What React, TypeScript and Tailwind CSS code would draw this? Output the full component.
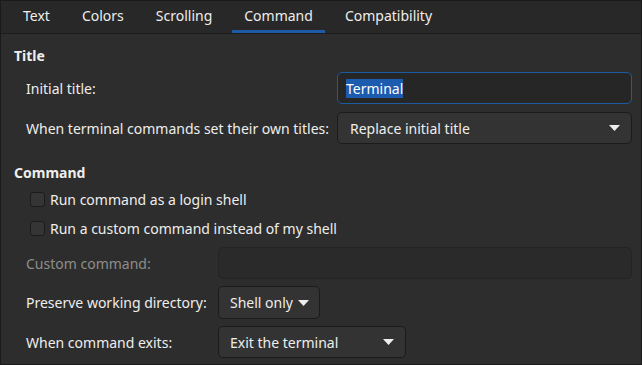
import React from "react";

const tabs = ["Text", "Colors", "Scrolling", "Command", "Compatibility"];

function Caret() {
  return (
    <svg width="11" height="6" viewBox="0 0 11 6" className="shrink-0">
      <path d="M0 0 L11 0 L5.5 6 Z" fill="#eeeeec" />
    </svg>
  );
}

function Check({ label }: { label: string }) {
  return (
    <div className="flex items-center h-[22px] pl-[16px] gap-[5px]">
      <span className="h-[15px] w-[15px] rounded-[3px] border border-[#1b1b1b] bg-[#353535]" />
      <span>{label}</span>
    </div>
  );
}

export default function App() {
  return (
    <div
      className="w-[642px] h-[365px] border border-[#1a1a1a] bg-[#2d2d2d] text-[#eeeeec] text-[14px] overflow-hidden"
      style={{ fontFamily: '"Noto Sans", "Open Sans", sans-serif' }}
    >
      <div className="flex h-[33px] pl-[10px] gap-2 bg-[#282828] border-b border-[#1c1c1c]">
        {tabs.map((t) => (
          <div
            key={t}
            className={`flex items-center px-3 border-b-[3px] ${
              t === "Command" ? "border-[#1e5aa5]" : "border-transparent"
            }`}
          >
            <span>{t}</span>
          </div>
        ))}
      </div>

      <div className="pl-[13px] pr-[9px] pt-[11px]">
        <div className="h-5 flex items-center font-bold">Title</div>

        <div className="mt-[7px] grid grid-cols-[311px_1fr] gap-y-[8px] pl-[12px]">
          <div className="h-[32px] flex items-center">Initial title:</div>
          <div className="h-[32px] flex items-center rounded-[5px] border border-[#1d5aa0] bg-[#262626] px-[8px]">
            <span className="bg-[#1c5bae] text-white leading-[19px]">Terminal</span>
          </div>
          <div className="h-[32px] flex items-center">When terminal commands set their own titles:</div>
          <div className="h-[32px] flex items-center justify-between rounded-[5px] border border-[#1b1b1b] bg-[#333333] pl-[12px] pr-[11px]">
            <span>Replace initial title</span>
            <Caret />
          </div>
        </div>

        <div className="mt-[18px] h-5 flex items-center font-bold">Command</div>

        <div className="mt-[6px] flex flex-col gap-[7px]">
          <Check label="Run command as a login shell" />
          <Check label="Run a custom command instead of my shell" />
        </div>

        <div className="mt-[8px] grid grid-cols-[192px_1fr] gap-y-[7px] pl-[12px]">
          <div className="h-[32px] flex items-center text-[#8d8d8b]">Custom command:</div>
          <div className="h-[32px] rounded-[5px] border border-[#242424] bg-[#2a2a2a]" />
          <div className="h-[33px] flex items-center">Preserve working directory:</div>
          <div className="flex">
            <div className="h-[33px] flex items-center gap-[5px] rounded-[5px] border border-[#1b1b1b] bg-[#333333] pl-[11px] pr-[10px]">
              <span>Shell only</span>
              <Caret />
            </div>
          </div>
          <div className="h-[32px] flex items-center">When command exits:</div>
          <div className="flex">
            <div className="h-[32px] w-[188px] flex items-center justify-between rounded-[5px] border border-[#1b1b1b] bg-[#333333] pl-[11px] pr-[11px]">
              <span>Exit the terminal</span>
              <Caret />
            </div>
          </div>
        </div>
      </div>
    </div>
  );
}
